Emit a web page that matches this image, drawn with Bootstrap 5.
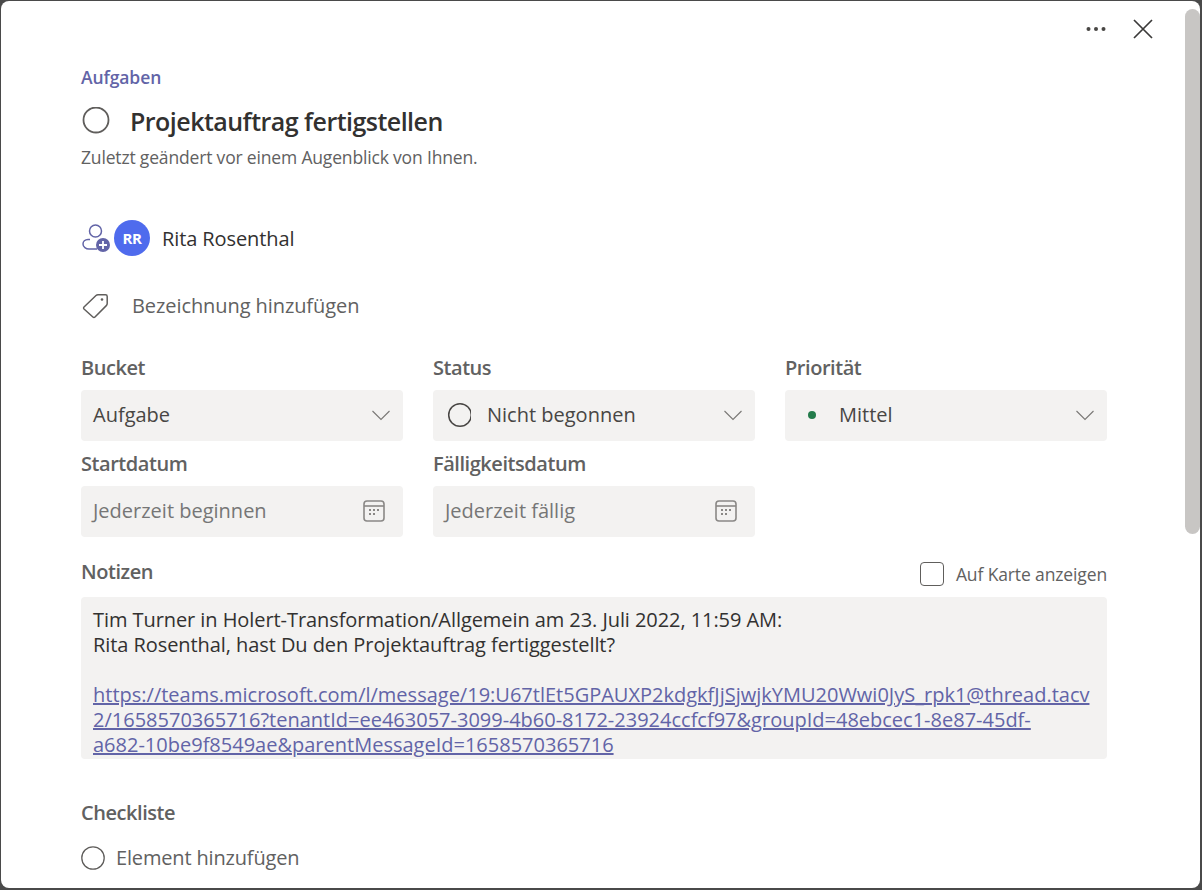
<!DOCTYPE html>
<html lang="de">
<head>
<meta charset="utf-8">
<title>Aufgabe</title>
<link href="https://cdn.jsdelivr.net/npm/bootstrap@5.3.0/dist/css/bootstrap.min.css" rel="stylesheet">
<style>
html,body{height:100%;overflow:hidden;background:#4a4a4a}
body{font-family:"Open Sans","Noto Sans","Liberation Sans",sans-serif;color:#252423}
.shell{height:887px;margin:1px 2px 0 1px;background:#fff;border-radius:8px;overflow:hidden;position:relative;padding:0 93px 0 80px}
.thumb{position:absolute;top:8px;right:0;width:15px;height:525px;background:#c8c6c4;border-radius:8px}
.toolbar{height:65px;margin-right:-47px;padding-top:17px;gap:25px}
.crumb{font-size:17.5px;font-weight:600;color:#6264a7;line-height:22px;height:40px;letter-spacing:-.1px}
.titlerow{height:32px;gap:19px}
.titletext{font-size:25px;font-weight:600;line-height:32px;letter-spacing:-.53px;color:#323130;padding-bottom:2px}
.sub{font-size:17.5px;color:#616161;line-height:22px;margin-top:8px;letter-spacing:-.17px}
.assign{margin-top:52px;height:36px;gap:3px}
.avatar{width:36px;height:36px;border-radius:50%;background:#4f6bed;color:#fff;font-size:15px;font-weight:700;letter-spacing:-.3px}
.person{font-size:20px;margin-left:9px;padding-top:2px;color:#323130;letter-spacing:-.1px}
.tagrow{margin-top:34px;height:32px;gap:20px;color:#616161;font-size:20px;letter-spacing:-.08px}
.fields{--bs-gutter-x:30px;--bs-gutter-y:0;margin-top:32px}
.flabel{font-size:20px;font-weight:600;color:#616161;line-height:27px;height:36px;letter-spacing:-.45px}
.fbox{height:51px;background:#f3f2f1;border-radius:4px;padding:0 12px 2px;font-size:20px;color:#484644;letter-spacing:0;margin-bottom:9px}
.fbox.dated{padding-right:18px}
.hint{color:#767676}
.dot{width:8px;height:8px;border-radius:50%;background:#237b4b;margin:0 23px 0 11px;flex:none}
.notehead{height:26px;margin-top:12px}
.notehead .flabel{height:27px}
.cardopt{margin-top:6px}
.chk{width:24px;height:24px;border:1.5px solid #605e5c;border-radius:4px;margin-right:12px}
.chklabel{font-size:17.5px;color:#616161;letter-spacing:-.13px}
.notes{margin-top:13px;height:162px;background:#f3f2f1;border-radius:4px;padding:10px 12px;font-size:20px;line-height:25px;color:#323130;letter-spacing:-.07px;overflow-wrap:anywhere}
.notes a{color:#6264a7;letter-spacing:0}
.checkhead{margin-top:40px;height:43px}
.itemrow{height:32px;gap:11px;color:#616161;font-size:20px;letter-spacing:-.16px}
</style>
</head>
<body>
<div class="shell">
  <div class="thumb"></div>

  <div class="d-flex justify-content-end align-items-start toolbar">
    <svg width="22" height="22" viewBox="0 0 22 22" fill="#484644"><circle cx="3.5" cy="11" r="2"/><circle cx="11" cy="11" r="2"/><circle cx="18.500" cy="11" r="2"/></svg>
    <svg width="22" height="22" viewBox="0 0 22 22" fill="none" stroke="#3b3a39" stroke-width="1.7"><path d="M2 2 20 20M20 2 2 20"/></svg>
  </div>

  <div class="crumb">Aufgaben</div>
  <div class="d-flex align-items-center titlerow">
    <svg width="30" height="30" viewBox="0 0 30 30" fill="none" stroke="#605e5c" stroke-width="1.8"><circle cx="15" cy="13" r="12.500"/></svg>
    <div class="titletext">Projektauftrag fertigstellen</div>
  </div>
  <div class="sub">Zuletzt geändert vor einem Augenblick von Ihnen.</div>

  <div class="d-flex align-items-center assign">
    <svg width="30" height="30" viewBox="0 0 30 30" fill="none" stroke="#6264a7" stroke-width="1.5">
      <circle cx="14.500" cy="8" r="6"/>
      <path d="M9 16.500H7c-3 0-5 2-5 4.500 0 3 3 5 6 5h8"/>
      <circle cx="22" cy="22" r="7" fill="#6264a7" stroke="none"/>
      <path d="M22 18v8M18 22h8" stroke="#fff" stroke-width="1.8"/>
    </svg>
    <div class="avatar d-flex align-items-center justify-content-center">RR</div>
    <div class="person">Rita Rosenthal</div>
  </div>

  <div class="d-flex align-items-center tagrow">
    <svg width="31" height="30" viewBox="0 0 31 30" fill="none" stroke="#605e5c" stroke-width="1.5" stroke-linejoin="round"><path d="M3 16 15 4.500c.6-.6 1.200-.8 2-.8h7.500c1 0 1.700.8 1.700 1.700v7.200c0 .8-.3 1.500-.9 2L14 26a1.500 1.500 0 0 1-2.100 0L3 18a1.400 1.400 0 0 1 0-2Z"/><circle cx="21" cy="8.500" r="1.300" fill="#605e5c" stroke="none"/></svg>
    <div>Bezeichnung hinzufügen</div>
  </div>

  <div class="row fields">
    <div class="col-4">
      <div class="flabel">Bucket</div>
      <div class="fbox d-flex align-items-center">
        <span class="flex-grow-1">Aufgabe</span>
        <svg width="20" height="12" viewBox="0 0 20 12" fill="none" stroke="#797775" stroke-width="1.100"><path d="M1.500 2 10 10.500 18.500 2"/></svg>
      </div>
    </div>
    <div class="col-4">
      <div class="flabel">Status</div>
      <div class="fbox d-flex align-items-center">
        <svg class="me-3" width="26" height="26" viewBox="0 0 26 26" fill="none" stroke="#484644" stroke-width="1.500"><circle cx="15" cy="13" r="11.300"/></svg>
        <span class="flex-grow-1">Nicht begonnen</span>
        <svg width="20" height="12" viewBox="0 0 20 12" fill="none" stroke="#797775" stroke-width="1.100"><path d="M1.500 2 10 10.500 18.500 2"/></svg>
      </div>
    </div>
    <div class="col-4">
      <div class="flabel">Priorität</div>
      <div class="fbox d-flex align-items-center">
        <span class="dot"></span>
        <span class="flex-grow-1">Mittel</span>
        <svg width="20" height="12" viewBox="0 0 20 12" fill="none" stroke="#797775" stroke-width="1.100"><path d="M1.500 2 10 10.500 18.500 2"/></svg>
      </div>
    </div>
    <div class="col-4">
      <div class="flabel">Startdatum</div>
      <div class="fbox dated d-flex align-items-center">
        <span class="flex-grow-1 hint">Jederzeit beginnen</span>
        <svg width="22" height="22" viewBox="0 0 22 22" fill="none" stroke="#8a8886" stroke-width="1.600"><rect x="1" y="1" width="20" height="20" rx="3"/><path d="M1 6h20"/><g fill="#8a8886" stroke="none"><rect x="6" y="9" width="2" height="2"/><rect x="10" y="9" width="2" height="2"/><rect x="14" y="9" width="2" height="2"/><rect x="6" y="13" width="2" height="2"/><rect x="10" y="13" width="2" height="2"/></g></svg>
      </div>
    </div>
    <div class="col-4">
      <div class="flabel">Fälligkeitsdatum</div>
      <div class="fbox dated d-flex align-items-center">
        <span class="flex-grow-1 hint">Jederzeit fällig</span>
        <svg width="22" height="22" viewBox="0 0 22 22" fill="none" stroke="#8a8886" stroke-width="1.600"><rect x="1" y="1" width="20" height="20" rx="3"/><path d="M1 6h20"/><g fill="#8a8886" stroke="none"><rect x="6" y="9" width="2" height="2"/><rect x="10" y="9" width="2" height="2"/><rect x="14" y="9" width="2" height="2"/><rect x="6" y="13" width="2" height="2"/><rect x="10" y="13" width="2" height="2"/></g></svg>
      </div>
    </div>
  </div>

  <div class="d-flex justify-content-between align-items-center notehead">
    <div class="flabel">Notizen</div>
    <div class="d-flex align-items-center cardopt">
      <span class="chk"></span>
      <span class="chklabel">Auf Karte anzeigen</span>
    </div>
  </div>
  <div class="notes">Tim Turner in Holert-Transformation/Allgemein am 23. Juli 2022, 11:59 AM:<br>Rita Rosenthal, hast Du den Projektauftrag fertiggestellt?<br><br><a href="#">https://teams.microsoft.com/l/message/19:U67tlEt5GPAUXP2kdgkfJjSjwjkYMU20Wwi0JyS_rpk1@thread.tacv2/1658570365716?tenantId=ee463057-3099-4b60-8172-23924ccfcf97&amp;groupId=48ebcec1-8e87-45df-<br>a682-10be9f8549ae&amp;parentMessageId=1658570365716</a></div>

  <div class="flabel checkhead">Checkliste</div>
  <div class="d-flex align-items-center itemrow">
    <svg width="24" height="24" viewBox="0 0 24 24" fill="none" stroke="#605e5c" stroke-width="1.300"><circle cx="12" cy="12" r="11.200"/></svg>
    <div>Element hinzufügen</div>
  </div>
</div>
<script src="https://cdn.jsdelivr.net/npm/bootstrap@5.3.0/dist/js/bootstrap.bundle.min.js"></script>
</body>
</html>
